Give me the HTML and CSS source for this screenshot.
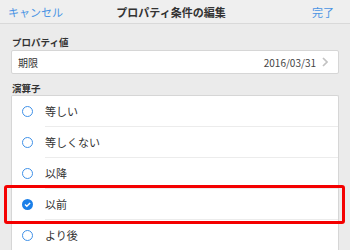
FILE: index.html
```html
<!DOCTYPE html>
<html lang="ja">
<head>
    <meta charset="UTF-8">
    <meta name="viewport" content="width=device-width, initial-scale=1.0">
    <title>プロパティ条件の編集</title>
    <link rel="stylesheet" href="styles.css">
</head>
<body>
    <div class="navbar">
        <span class="nav-btn left">キャンセル</span>
        <span class="nav-title">プロパティ条件の編集</span>
        <span class="nav-btn right">完了</span>
    </div>

    <div class="content">
        <div class="section-label">プロパティ値</div>
        <div class="value-box">
            <span class="value-name">期限</span>
            <span class="value-date">2016/03/31</span>
            <svg class="chevron" width="6" height="10" viewBox="0 0 6 10">
                <path d="M1 1 L5 5 L1 9" fill="none" stroke="#c2c2c2" stroke-width="1.7"/>
            </svg>
        </div>

        <div class="section-label op-label">演算子</div>
        <div class="option-list">
            <div class="option">
                <span class="radio"></span>
                <span class="option-text">等しい</span>
            </div>
            <div class="option">
                <span class="radio"></span>
                <span class="option-text">等しくない</span>
            </div>
            <div class="option">
                <span class="radio"></span>
                <span class="option-text">以降</span>
            </div>
            <div class="option selected highlight">
                <span class="radio checked">
                    <svg width="11" height="11" viewBox="0 0 11 11">
                        <circle cx="5.5" cy="5.5" r="5.5" fill="#1b7fe8"/>
                        <path d="M3 5.6 L4.8 7.3 L8.1 3.9" fill="none" stroke="#fff" stroke-width="1.4"/>
                    </svg>
                </span>
                <span class="option-text">以前</span>
            </div>
            <div class="option">
                <span class="radio"></span>
                <span class="option-text">より後</span>
            </div>
        </div>
    </div>
</body>
</html>
```

FILE: styles.css
```css
body {
    margin: 0;
    background-color: #ebebeb;
    font-family: "Noto Sans CJK JP", "Noto Sans", sans-serif;
    color: #333;
    overflow: hidden;
}
.navbar {
    display: grid;
    grid-template-columns: 1fr auto 1fr;
    align-items: center;
    height: 23px;
    padding: 0 16px 0 8px;
    background-color: #efefef;
    border-bottom: 1px solid #d9d9d9;
}
.nav-btn {
    font-size: 11px;
    color: #4a94e4;
}
.nav-btn.right {
    justify-self: end;
}
.nav-title {
    font-size: 11px;
    font-weight: bold;
    color: #333;
}
.content {
    padding: 0 11px;
}
.section-label {
    padding-top: 11px;
    padding-left: 1px;
    font-size: 9.5px;
    font-weight: bold;
    line-height: 14px;
    color: #333;
}
.op-label {
    padding-top: 7px;
}
.value-box {
    display: flex;
    align-items: center;
    box-sizing: border-box;
    height: 24px;
    margin-top: 1px;
    padding: 0 10px 0 6px;
    background: #fff;
    border: 1px solid #d6d6d6;
    border-radius: 2px;
    font-size: 10px;
}
.value-name {
    flex: 1;
}
.value-date {
    margin-right: 6px;
    color: #444;
}
.option-list {
    background: #fff;
    border: 1px solid #d6d6d6;
    border-bottom: none;
    border-radius: 2px 2px 0 0;
}
.option {
    position: relative;
    display: flex;
    align-items: stretch;
    height: 31px;
    padding-left: 10px;
}
.radio {
    flex: none;
    align-self: center;
    box-sizing: border-box;
    width: 11px;
    height: 11px;
    margin-right: 12px;
    border: 1.3px solid #3f91e8;
    border-radius: 50%;
}
.radio.checked {
    border: none;
}
.radio svg {
    display: block;
}
.option-text {
    flex: 1;
    display: flex;
    align-items: center;
    font-size: 11px;
    border-bottom: 1px solid #ececec;
}
.highlight::after {
    content: "";
    position: absolute;
    top: -4px;
    bottom: -4px;
    left: -8px;
    right: -7px;
    border: 3px solid #f40000;
    border-radius: 3px;
}
```
